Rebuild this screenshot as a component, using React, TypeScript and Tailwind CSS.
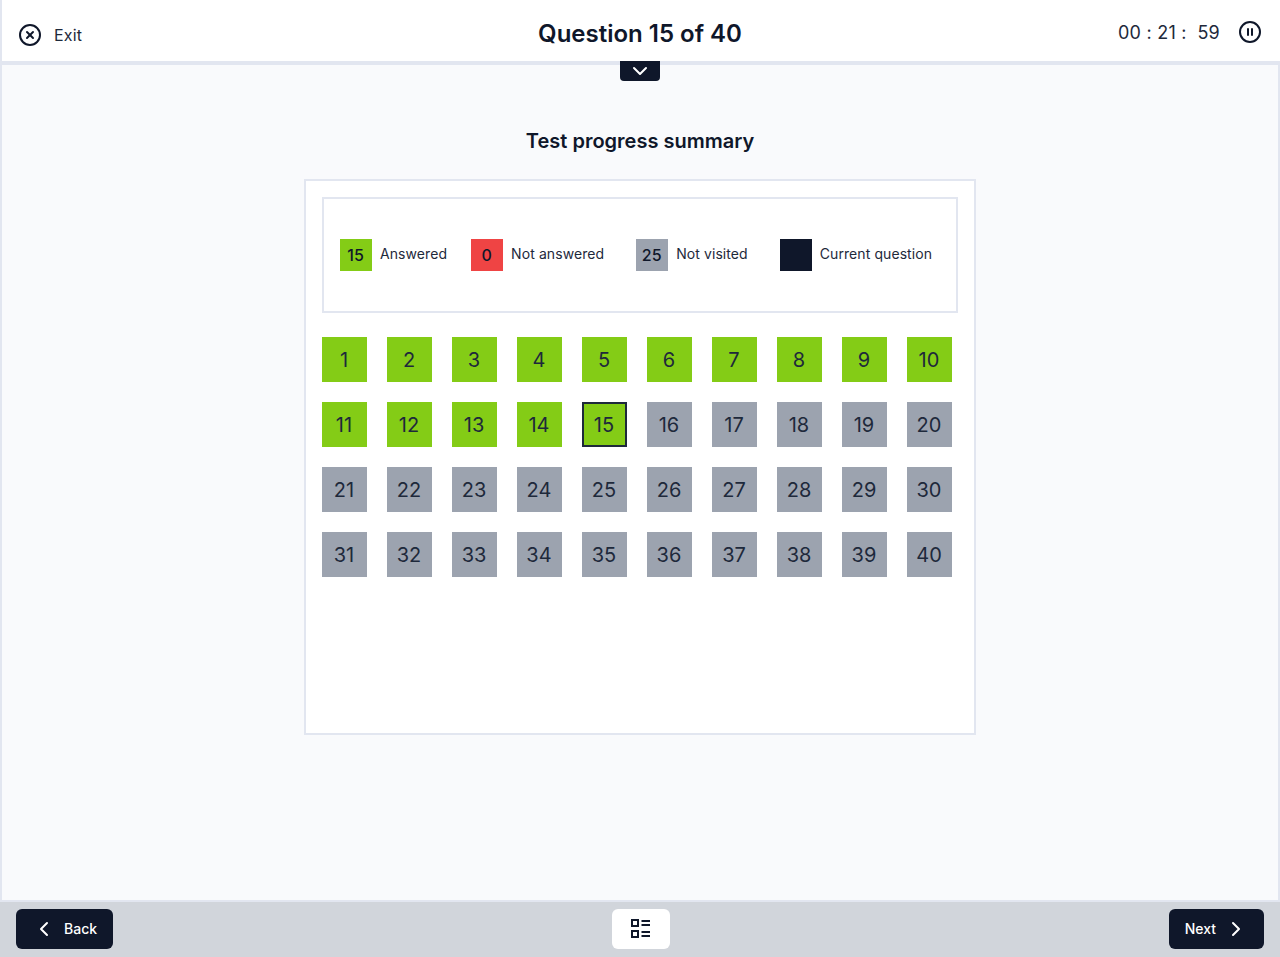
import { ChevronDown, ChevronLeft, ChevronRight, CirclePause, CircleX } from 'lucide-react';

const legend = [
  { count: '15', label: 'Answered', color: 'bg-[#84cc16]', gap: 'mr-6' },
  { count: '0', label: 'Not answered', color: 'bg-[#ef4444]', gap: 'mr-8' },
  { count: '25', label: 'Not visited', color: 'bg-[#9ca3af]', gap: 'mr-8' },
  { count: '', label: 'Current question', color: 'bg-[#0f172a]', gap: '' },
];

const questions = Array.from({ length: 40 }, (_, i) => i + 1);

function ListIcon() {
  return (
    <svg width="22" height="22" viewBox="0 0 22 22" fill="none" stroke="#0f172a" strokeWidth="2">
      <rect x="2" y="2" width="6" height="6" />
      <rect x="2" y="13" width="6" height="6" />
      <path d="M11.5 3h8.5M11.5 7h8.5M11.5 14h8.5M11.5 18h8.5" />
    </svg>
  );
}

export default function App() {
  return (
    <div className="h-[957px] flex flex-col font-['Inter',sans-serif] text-[#0f172a]">
      <header className="relative h-[65px] shrink-0 flex items-center justify-between bg-white border-l-2 border-b-4 border-[#e2e6f0] pl-4 pr-[18px]">
        <div className="flex items-center gap-3 mt-[8px]">
          <CircleX size={24} strokeWidth={2} />
          <span className="text-[16px] tracking-[0.2px] text-[#1e293b]">Exit</span>
        </div>
        <h1 className="absolute left-0 right-[2px] mt-[6px] text-center text-[24px] leading-8 font-semibold">Question 15 of 40</h1>
        <div className="flex items-center gap-[18px] mt-[3px]">
          <span className="text-[18px] tracking-[0.25px] text-[#1e293b] whitespace-pre">00 : 21 :  59</span>
          <CirclePause size={24} strokeWidth={2} />
        </div>
        <div className="absolute left-[618px] top-[61px] w-10 h-5 flex items-center justify-center rounded-b bg-[#0f172a] text-white">
          <ChevronDown size={24} strokeWidth={2} />
        </div>
      </header>

      <main className="flex-1 flex flex-col items-center bg-[#f9fafc] border-x-2 border-[#e2e6f0]">
        <h2 className="mt-[62px] text-[20px] leading-7 font-semibold">Test progress summary</h2>
        <section className="mt-[24px] w-[672px] h-[556px] bg-white border-2 border-[#e2e6f0] p-4">
          <div className="h-[116px] flex items-center border-2 border-[#e2e6f0] px-4">
            {legend.map((item) => (
              <div key={item.label} className={`flex items-center gap-2 ${item.gap}`}>
                <div className={`w-8 h-8 flex items-center justify-center pr-px text-[16px] font-medium ${item.color}`}>
                  {item.count}
                </div>
                <span className="-mt-[4px] text-[14px] tracking-[0.08px] text-[#1e293b]">{item.label}</span>
              </div>
            ))}
          </div>
          <div className="mt-6 grid grid-cols-[repeat(10,45px)] gap-5">
            {questions.map((n) => (
              <div
                key={n}
                className={`h-[45px] flex items-center justify-center pr-px text-[20px] text-[#1e293b] ${
                  n <= 15 ? 'bg-[#84cc16]' : 'bg-[#9ca3af]'
                } ${n === 15 ? 'border-2 border-[#1e293b]' : ''}`}
              >
                {n}
              </div>
            ))}
          </div>
        </section>
      </main>

      <footer className="h-[57px] shrink-0 flex items-center justify-between bg-[#d1d5db] border-t-2 border-[#e2e6f0] px-4 pb-[2px]">
        <button className="h-10 flex items-center gap-2 px-4 rounded-md bg-[#0f172a] text-white text-[14px] font-medium">
          <ChevronLeft size={24} strokeWidth={2} />
          Back
        </button>
        <button className="w-[58px] h-10 flex items-center justify-center rounded-md bg-white">
          <ListIcon />
        </button>
        <button className="h-10 flex items-center gap-2 px-4 rounded-md bg-[#0f172a] text-white text-[14px] font-medium">
          Next
          <ChevronRight size={24} strokeWidth={2} />
        </button>
      </footer>
    </div>
  );
}
